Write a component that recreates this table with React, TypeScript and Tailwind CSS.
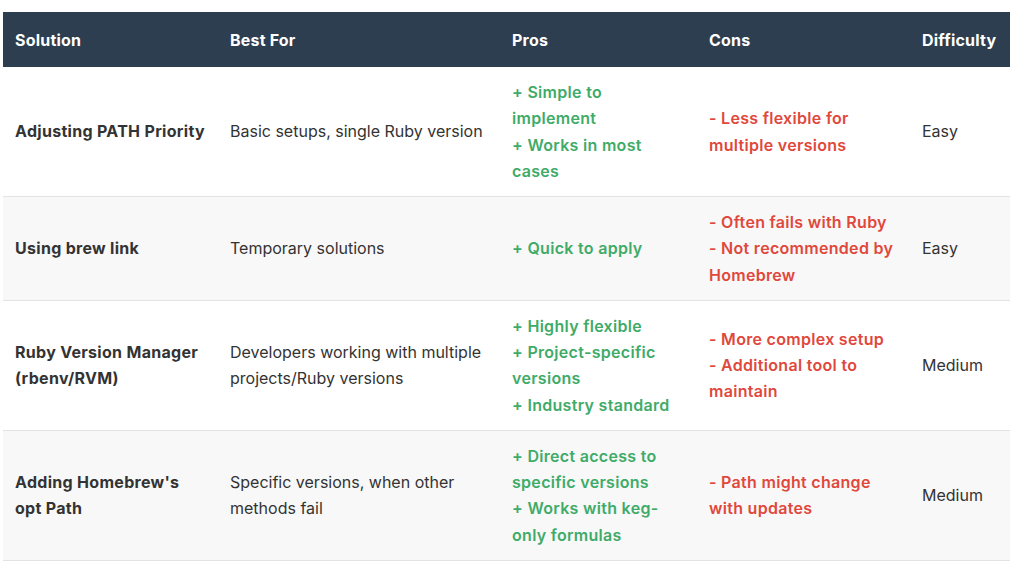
import React from 'react';

type Row = {
    solution: string;
    bestFor: string;
    pros: string[];
    cons: string[];
    difficulty: string;
};

const rows: Row[] = [
    {
        solution: 'Adjusting PATH Priority',
        bestFor: 'Basic setups, single Ruby version',
        pros: ['+ Simple to implement', '+ Works in most cases'],
        cons: ['- Less flexible for multiple versions'],
        difficulty: 'Easy',
    },
    {
        solution: 'Using brew link',
        bestFor: 'Temporary solutions',
        pros: ['+ Quick to apply'],
        cons: ['- Often fails with Ruby', '- Not recommended by Homebrew'],
        difficulty: 'Easy',
    },
    {
        solution: 'Ruby Version Manager (rbenv/RVM)',
        bestFor: 'Developers working with multiple projects/Ruby versions',
        pros: ['+ Highly flexible', '+ Project-specific versions', '+ Industry standard'],
        cons: ['- More complex setup', '- Additional tool to maintain'],
        difficulty: 'Medium',
    },
    {
        solution: "Adding Homebrew's opt Path",
        bestFor: 'Specific versions, when other methods fail',
        pros: ['+ Direct access to specific versions', '+ Works with keg-only formulas'],
        cons: ['- Path might change with updates'],
        difficulty: 'Medium',
    },
];

const headers = ['Solution', 'Best For', 'Pros', 'Cons', 'Difficulty'];

function App() {
    return (
        <main className="min-h-[566px] bg-white pt-[12px] pl-[3px] font-['Inter',sans-serif] text-[16px] text-[#333]">
            <table className="w-[1007px] table-fixed border-collapse">
                <colgroup>
                    <col className="w-[215px]" />
                    <col className="w-[282px]" />
                    <col className="w-[197px]" />
                    <col className="w-[213px]" />
                    <col className="w-[100px]" />
                </colgroup>
                <thead>
                    <tr className="h-[55px] bg-[#2c3e50]">
                        {headers.map((h) => (
                            <th key={h} className="px-[12px] text-left font-bold text-white leading-[26px] tracking-[0.2px] whitespace-nowrap">
                                {h}
                            </th>
                        ))}
                    </tr>
                </thead>
                <tbody>
                    {rows.map((row, i) => (
                        <tr key={i} className={`border-b border-[#e3e3e3] ${i % 2 === 1 ? 'bg-[#f8f8f8]' : 'bg-white'}`}>
                            <td className="px-[12px] py-[12px] font-bold leading-[26.25px] tracking-[0.3px] text-[#333]">{row.solution}</td>
                            <td className="px-[12px] py-[12px] leading-[26.25px] text-[#333]">{row.bestFor}</td>
                            <td className="px-[12px] py-[12px] font-semibold leading-[26.25px] tracking-[0.3px] text-[#3fab68]">
                                {row.pros.map((p) => (
                                    <div key={p}>{p}</div>
                                ))}
                            </td>
                            <td className="px-[12px] py-[12px] font-semibold leading-[26.25px] tracking-[0.3px] text-[#e0483c]">
                                {row.cons.map((c) => (
                                    <div key={c}>{c}</div>
                                ))}
                            </td>
                            <td className="px-[12px] py-[12px] leading-[26.25px] text-[#333]">{row.difficulty}</td>
                        </tr>
                    ))}
                </tbody>
            </table>
        </main>
    );
}

export default App;
